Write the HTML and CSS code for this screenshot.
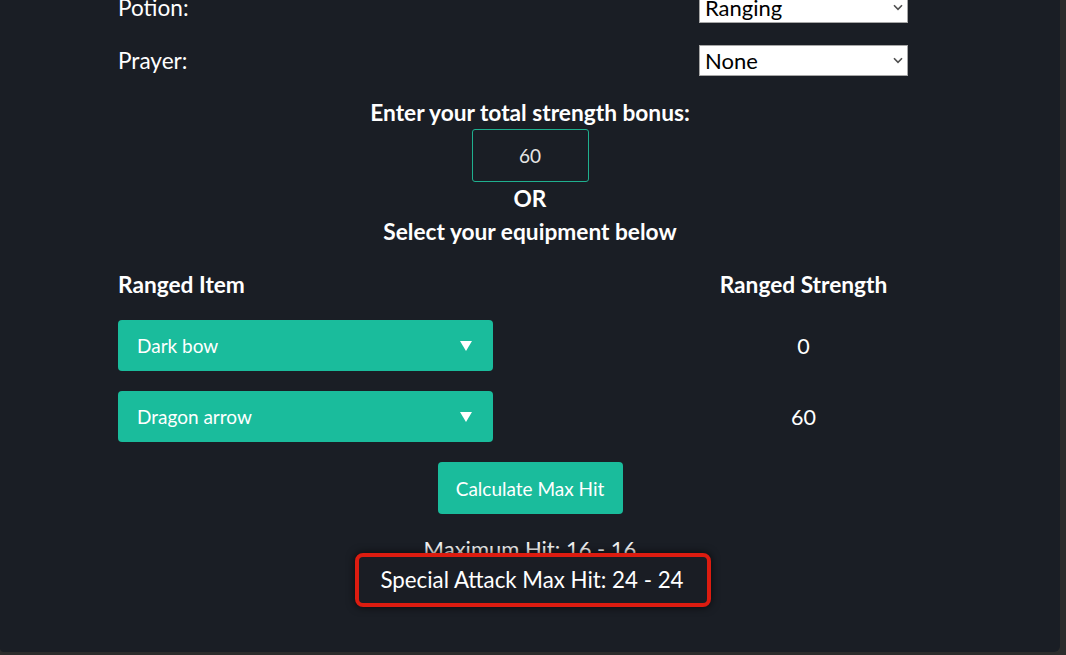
FILE: index.html
```html
<!DOCTYPE html>
<html lang="en">
<head>
    <meta charset="UTF-8">
    <meta name="viewport" content="width=device-width, initial-scale=1.0">
    <title>Ranged Max Hit Calculator</title>
    <link rel="stylesheet" href="styles.css">
</head>
<body>
    <div class="panel">
        <div class="container">
            <div class="form-row">
                <label for="potion">Potion:</label>
                <div class="select-wrap">
                    <select id="potion" class="plain-select">
                        <option>Ranging</option>
                        <option>None</option>
                    </select>
                    <svg class="chevron" width="10" height="7" viewBox="0 0 10 7"><path d="M1 1.2 L5 5.4 L9 1.2" fill="none" stroke="#505050" stroke-width="1.6"/></svg>
                </div>
            </div>
            <div class="form-row">
                <label for="prayer">Prayer:</label>
                <div class="select-wrap">
                    <select id="prayer" class="plain-select">
                        <option>None</option>
                        <option>Eagle Eye</option>
                        <option>Rigour</option>
                    </select>
                    <svg class="chevron" width="10" height="7" viewBox="0 0 10 7"><path d="M1 1.2 L5 5.4 L9 1.2" fill="none" stroke="#505050" stroke-width="1.6"/></svg>
                </div>
            </div>

            <div class="bonus">
                <h4>Enter your total strength bonus:</h4>
                <input type="text" class="bonus-input" value="60">
                <h4>OR</h4>
                <h4>Select your equipment below</h4>
            </div>

            <div class="equip-head">
                <div>Ranged Item</div>
                <div class="col-center">Ranged Strength</div>
            </div>

            <div class="equipment">
                <div class="item-select">
                    <span>Dark bow</span>
                    <span class="caret"></span>
                </div>
                <div class="col-value">0</div>

                <div class="item-select">
                    <span>Dragon arrow</span>
                    <span class="caret"></span>
                </div>
                <div class="col-value">60</div>
            </div>

            <div class="actions">
                <button class="btn">Calculate Max Hit</button>
            </div>

            <div class="results">
                <p class="result-line">Maximum Hit: 16 - 16</p>
                <div class="highlight">Special Attack Max Hit: 24 - 24</div>
            </div>
        </div>
    </div>
</body>
</html>
```

FILE: styles.css
```css
html, body {
    margin: 0;
    padding: 0;
}
body {
    background: #2c2c2c;
    font-family: 'Lato', 'Open Sans', sans-serif;
    color: #ffffff;
    height: 655px;
    overflow: hidden;
}
.panel {
    width: 1060px;
    height: 652px;
    background: #1a1e25;
    border-bottom-right-radius: 6px;
    border-bottom-left-radius: 4px;
    overflow: hidden;
    display: flex;
    justify-content: center;
}
.container {
    width: 824px;
    margin-top: -8px;
}
.form-row {
    width: 790px;
    height: 31px;
    display: flex;
    align-items: center;
    justify-content: space-between;
    margin-bottom: 22px;
    font-size: 22.6px;
}
.select-wrap {
    position: relative;
    width: 209px;
    height: 31px;
}
.plain-select {
    -webkit-appearance: none;
    appearance: none;
    width: 209px;
    height: 31px;
    font-family: 'Lato', sans-serif;
    font-size: 22px;
    color: #000;
    background: #fff;
    border: 1px solid #a7a7a7;
    border-radius: 0;
    padding: 0 5px;
    display: block;
}
.chevron {
    position: absolute;
    right: 5px;
    top: 12px;
    pointer-events: none;
}
.bonus {
    text-align: center;
    margin-top: -2px;
}
.bonus h4 {
    margin: 0;
    font-size: 22.7px;
    font-weight: bold;
    line-height: 33px;
}
.bonus-input {
    width: 117px;
    height: 53px;
    box-sizing: border-box;
    background: transparent;
    border: 1px solid #1fb08f;
    border-radius: 3px;
    color: #e6e6e6;
    font-family: 'Lato', sans-serif;
    font-size: 19px;
    text-align: center;
    display: block;
    margin: 0 auto;
    outline: none;
}
.equip-head {
    width: 790px;
    display: grid;
    grid-template-columns: 1fr 209px;
    font-size: 22.7px;
    font-weight: bold;
    line-height: 33px;
    margin-top: 20px;
}
.col-center {
    text-align: center;
}
.equipment {
    width: 790px;
    display: grid;
    grid-template-columns: 1fr 209px;
    grid-auto-rows: 51px;
    row-gap: 20px;
    margin-top: 19px;
}
.item-select {
    width: 375px;
    background: #1abc9c;
    border-radius: 4px;
    display: flex;
    align-items: center;
    justify-content: space-between;
    padding: 0 21px 0 19px;
    box-sizing: border-box;
    font-size: 19px;
    color: #fff;
}
.caret {
    width: 0;
    height: 0;
    border-left: 6.5px solid transparent;
    border-right: 6.5px solid transparent;
    border-top: 10px solid #fff;
}
.col-value {
    font-size: 21.5px;
    display: flex;
    align-items: center;
    justify-content: center;
}
.actions {
    text-align: center;
    margin-top: 20px;
}
.btn {
    width: 185px;
    height: 52px;
    background: #1abc9c;
    color: #fff;
    border: none;
    border-radius: 4px;
    font-family: 'Lato', sans-serif;
    font-size: 19px;
    cursor: pointer;
}
.results {
    text-align: center;
    margin-top: 18px;
}
.result-line {
    margin: 0;
    font-size: 22px;
    line-height: 33px;
    color: #f0f0f0;
}
.highlight {
    position: relative;
    width: fit-content;
    margin: -12px auto 0;
    left: 3px;
    padding: 0 23px 0 21px;
    height: 46px;
    line-height: 46px;
    font-size: 22.3px;
    background: #1a1d24;
    border: 4px solid #dc1c10;
    border-radius: 8px;
    box-shadow: 0 0 8px rgba(0, 0, 0, 0.7);
    color: #fff;
}
```
